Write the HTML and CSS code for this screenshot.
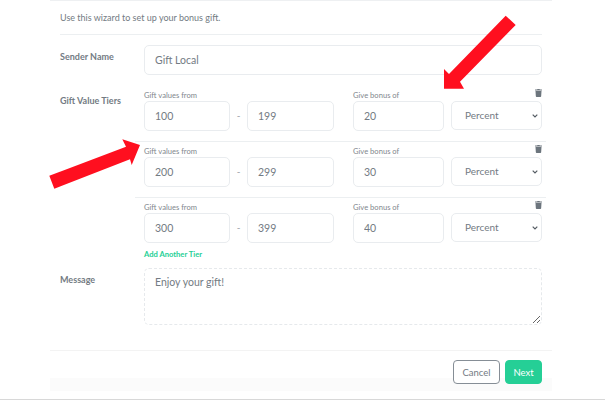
FILE: index.html
```html
<!DOCTYPE html>
<html lang="en">
<head>
  <meta charset="UTF-8" />
  <title>Bonus Gift Wizard</title>
  <link rel="stylesheet" href="styles.css">
</head>
<body>
<div class="modal">
  <div class="modal-body">
    <p class="intro">Use this wizard to set up your bonus gift.</p>

    <div class="form-row sender-row">
      <label class="row-label" for="senderName">Sender Name</label>
      <input class="field" type="text" id="senderName" value="Gift Local">
    </div>

    <div class="form-row tiers-row">
      <div class="row-label">Gift Value Tiers</div>
      <div class="tiers">
        <div class="tier">
          <span class="small-label label-from">Gift values from</span>
          <span class="small-label label-bonus">Give bonus of</span>
          <svg class="trash" viewBox="0 0 448 512"><path d="M432 32H312l-9.400-18.700A24 24 0 0 0 281.100 0H166.800a23.700 23.700 0 0 0-21.400 13.300L136 32H16A16 16 0 0 0 0 48v32a16 16 0 0 0 16 16h416a16 16 0 0 0 16-16V48a16 16 0 0 0-16-16zM53.200 467a48 48 0 0 0 47.900 45h245.800a48 48 0 0 0 47.900-45L416 128H32z"/></svg>
          <input class="field" type="text" value="100">
          <span class="dash">-</span>
          <input class="field" type="text" value="199">
          <input class="field bonus" type="text" value="20">
          <select class="field unit"><option>Percent</option></select>
        </div>
        <div class="tier">
          <span class="small-label label-from">Gift values from</span>
          <span class="small-label label-bonus">Give bonus of</span>
          <svg class="trash" viewBox="0 0 448 512"><path d="M432 32H312l-9.400-18.700A24 24 0 0 0 281.100 0H166.800a23.700 23.700 0 0 0-21.400 13.300L136 32H16A16 16 0 0 0 0 48v32a16 16 0 0 0 16 16h416a16 16 0 0 0 16-16V48a16 16 0 0 0-16-16zM53.200 467a48 48 0 0 0 47.900 45h245.800a48 48 0 0 0 47.900-45L416 128H32z"/></svg>
          <input class="field" type="text" value="200">
          <span class="dash">-</span>
          <input class="field" type="text" value="299">
          <input class="field bonus" type="text" value="30">
          <select class="field unit"><option>Percent</option></select>
        </div>
        <div class="tier">
          <span class="small-label label-from">Gift values from</span>
          <span class="small-label label-bonus">Give bonus of</span>
          <svg class="trash" viewBox="0 0 448 512"><path d="M432 32H312l-9.400-18.700A24 24 0 0 0 281.100 0H166.800a23.700 23.700 0 0 0-21.400 13.300L136 32H16A16 16 0 0 0 0 48v32a16 16 0 0 0 16 16h416a16 16 0 0 0 16-16V48a16 16 0 0 0-16-16zM53.200 467a48 48 0 0 0 47.900 45h245.800a48 48 0 0 0 47.900-45L416 128H32z"/></svg>
          <input class="field" type="text" value="300">
          <span class="dash">-</span>
          <input class="field" type="text" value="399">
          <input class="field bonus" type="text" value="40">
          <select class="field unit"><option>Percent</option></select>
        </div>
        <a class="add-tier" href="#">Add Another Tier</a>
      </div>
    </div>

    <div class="form-row message-row">
      <label class="row-label" for="message">Message</label>
      <textarea class="field message" id="message">Enjoy your gift!</textarea>
    </div>
  </div>

  <div class="modal-footer">
    <button class="btn btn-cancel">Cancel</button>
    <button class="btn btn-next">Next</button>
  </div>
</div>

<!-- red arrows drawn over the screenshot -->
<svg class="arrows" viewBox="0 0 605 400">
  <polygon points="49.300,175.700 54.300,188.700 130,159.300 131.700,165 140,145 122.300,139.300 126,146.700"/>
  <polygon points="505.700,15.700 515.700,25 460,81.700 464,88.700 444,88.700 444,69 449,74"/>
</svg>
</body>
</html>
```

FILE: styles.css
```css
html, body {
  height: 400px;
  overflow: hidden;
}

body {
  margin: 0;
  background-color: white;
  font-family: "Lato", "Noto Sans", sans-serif;
  color: #737b83;
  border-bottom: 1px solid #d8d8d8;
  box-sizing: border-box;
}

.modal {
  width: 502px;
  margin-left: 50px;
  border-top: 1px solid #eef0f2;
  box-sizing: border-box;
}

.modal-body {
  padding: 0 10px;
}

.intro {
  margin: 0;
  height: 34px;
  padding-top: 10px;
  box-sizing: border-box;
  font-size: 9px;
  line-height: 14px;
  border-bottom: 1px solid #eceff1;
}

.form-row {
  display: flex;
}

.row-label {
  width: 84px;
  flex-shrink: 0;
  font-size: 9px;
  font-weight: 700;
  line-height: 14px;
  color: #737b83;
}

.sender-row {
  margin-top: 10px;
}

.sender-row .row-label {
  padding-top: 5px;
}

.tiers-row {
  margin-top: 15px;
}

.tiers-row .row-label {
  padding-top: 4px;
}

.field {
  display: block;
  width: 100%;
  height: 30px;
  padding: 0 10px;
  box-sizing: border-box;
  background-color: white;
  border: 1px solid #e9ecef;
  border-radius: 5px;
  font-family: inherit;
  font-size: 10.5px;
  color: #737b83;
  outline: none;
}

.tiers {
  flex: 1;
  min-width: 0;
}

.tier {
  display: grid;
  grid-template-columns: 86px 17px 87px 19px 91px 7px 91px;
  grid-template-rows: 11px 30px;
  margin: 0 -4px 4px -9px;
  padding: 0 4px 10px 9px;
  border-bottom: 1px solid #eceff1;
}

.tier:nth-child(3) {
  margin-bottom: 0;
  padding-bottom: 6px;
  border-bottom: none;
}

.small-label {
  font-size: 7.6px;
  line-height: 11px;
  color: #7f878e;
  white-space: nowrap;
}

.label-from {
  grid-column: 1 / 4;
  grid-row: 1;
}

.label-bonus {
  grid-column: 5;
  grid-row: 1;
}

.trash {
  grid-column: 7;
  grid-row: 1;
  justify-self: end;
  width: 7px;
  height: 8px;
  margin-top: -1px;
  fill: #6c757d;
}

.dash {
  grid-row: 2;
  font-size: 10px;
  line-height: 28px;
  text-align: center;
  color: #98a0a6;
}

.tier .field {
  grid-row: 2;
}

.bonus {
  grid-column: 5;
}

.unit {
  grid-column: 7;
  height: 29px;
  padding: 0 10px 2px 13px;
  font-size: 10px;
  appearance: none;
  background-image: url("data:image/svg+xml,%3Csvg xmlns='http://www.w3.org/2000/svg' width='6' height='4'%3E%3Cpath d='M.7.7 3 3l2.300-2.300' fill='none' stroke='%23555c63' stroke-width='1.200'/%3E%3C/svg%3E");
  background-repeat: no-repeat;
  background-position: right 3px center;
}

.add-tier {
  display: block;
  font-size: 7.6px;
  line-height: 11px;
  font-weight: 700;
  color: #25cf96;
  text-decoration: none;
}

.message-row {
  margin-top: 8px;
}

.message-row .row-label {
  padding-top: 5px;
}

.message {
  flex: 1;
  width: auto;
  height: 57px;
  padding: 6px 10px;
  border: 1px dashed #e6e9ec;
  line-height: 15px;
}

.modal-footer {
  display: flex;
  justify-content: flex-end;
  gap: 5px;
  height: 41px;
  margin-top: 25px;
  padding: 9px 10px 0 0;
  box-sizing: border-box;
  border-top: 1px solid #f3f3f3;
  background: linear-gradient(#ffffff 68%, #fbfbfb 68%);
}

.btn {
  height: 24px;
  padding: 0;
  border-radius: 4px;
  font-family: inherit;
  font-size: 9.500px;
}

.btn-cancel {
  width: 47px;
  background-color: white;
  border: 1px solid #868e96;
  color: #737b83;
}

.btn-next {
  width: 37px;
  background-color: #25cf96;
  border: 1px solid #25cf96;
  color: white;
}

.arrows {
  position: absolute;
  top: 0;
  left: 0;
  width: 605px;
  height: 400px;
  fill: #ff0f1f;
  pointer-events: none;
}
```
